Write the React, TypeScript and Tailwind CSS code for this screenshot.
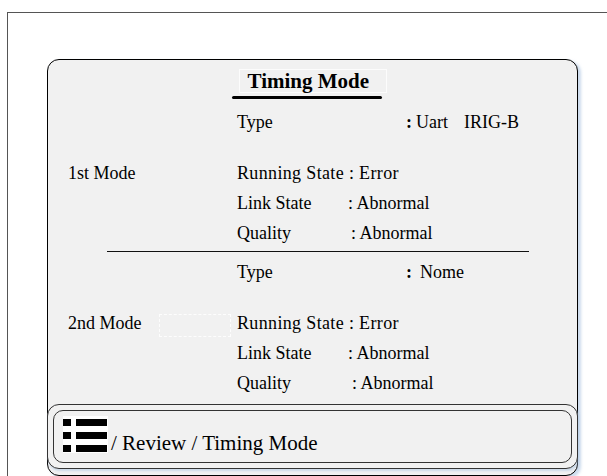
import React from "react";

type Field = {
  name: string;
  nameWidth: string;
  value: React.ReactNode;
};

const MenuIcon: React.FC = () => (
  <span className="flex bg-white pt-[3px] pb-px pr-px">
    <svg width="44" height="33" viewBox="0 0 44 33">
      <rect x="0" y="0" width="8" height="7" fill="#000" />
      <rect x="13" y="0" width="31" height="7" fill="#000" />
      <rect x="0" y="13" width="8" height="7" fill="#000" />
      <rect x="13" y="13" width="31" height="7" fill="#000" />
      <rect x="0" y="26" width="8" height="7" fill="#000" />
      <rect x="13" y="26" width="31" height="7" fill="#000" />
    </svg>
  </span>
);

const Row: React.FC<{ label?: string; field: Field; h?: string }> = ({ label, field, h = "h-[30px]" }) => (
  <div className={`flex items-center pl-[20px] ${h}`}>
    <span className="w-[169px] shrink-0">{label}</span>
    <span className={`${field.nameWidth} shrink-0`}>{field.name}</span>
    {field.value}
  </div>
);

const ModeBlock: React.FC<{ label: string; type: React.ReactNode; quality: string }> = ({
  label,
  type,
  quality,
}) => (
  <>
    <Row field={{ name: "Type", nameWidth: "w-[169px]", value: type }} h="h-[28px]" />
    <div className="mt-[22px]">
      <Row
        label={label}
        field={{
          name: "",
          nameWidth: "w-0",
          value: <span className="tracking-[0.35px]">Running State : Error</span>,
        }}
      />
    </div>
    <Row field={{ name: "Link State", nameWidth: "w-[111px]", value: <span>: Abnormal</span> }} />
    <Row field={{ name: "Quality", nameWidth: quality, value: <span>: Abnormal</span> }} />
  </>
);

export default function App() {
  return (
    <div className="w-[607px] h-[476px] overflow-hidden bg-white font-['Liberation_Serif',serif] text-[18px] text-black">
      <div className="ml-[7px] mt-[12px] h-[464px] border-l border-t border-[#555] pl-[39px] pt-[46px]">
        <div className="relative flex h-[417px] w-[531px] flex-col rounded-[12px] border border-black bg-[#f1f1f1] shadow-[3px_2px_3px_rgba(170,195,225,0.6)]">
          {/* title */}
          <div className="flex flex-col items-center pt-[9px]">
            <div className="h-[24px] w-[148px] border border-[#fcfcfc] pl-[8px] text-[21px] font-bold leading-[22px]">
              Timing Mode
            </div>
            <div className="mr-[11px] mt-[3px] h-[3px] w-[150px] rounded-full bg-black" />
          </div>

          <div className="mt-[9px]">
            <ModeBlock
              label="1st Mode"
              quality="w-[114px]"
              type={
                <span className="flex">
                  <span className="font-bold">:</span>
                  <span className="ml-[4px]">Uart</span>
                  <span className="ml-[16px]">IRIG-B</span>
                </span>
              }
            />
          </div>

          <div className="ml-[59px] mt-[3px] h-px w-[422px] bg-[#111]" />

          <div className="mt-[6px]">
            <ModeBlock
              label="2nd Mode"
              quality="w-[115px]"
              type={
                <span className="flex">
                  <span className="font-bold">:</span>
                  <span className="ml-[8px]">Nome</span>
                </span>
              }
            />
          </div>

          {/* dashed placeholder */}
          <div className="pointer-events-none absolute left-[111px] top-[254px] h-[23px] w-[72px] border border-dashed border-[#fdfdfd]" />

          {/* breadcrumb */}
          <div className="-mx-px mb-[6px] mt-auto rounded-[12px] border border-[#333] bg-[#f1f1f1] p-[5px] shadow-[1px_2px_2px_rgba(170,195,225,0.5)]">
            <div className="flex h-[53px] items-end rounded-[10px] border border-[#333] pb-[9px] pl-[9px]">
              <MenuIcon />
              <span className="ml-[3px] text-[21px] leading-[20px]">/ Review / Timing Mode</span>
            </div>
          </div>
        </div>
      </div>
    </div>
  );
}
